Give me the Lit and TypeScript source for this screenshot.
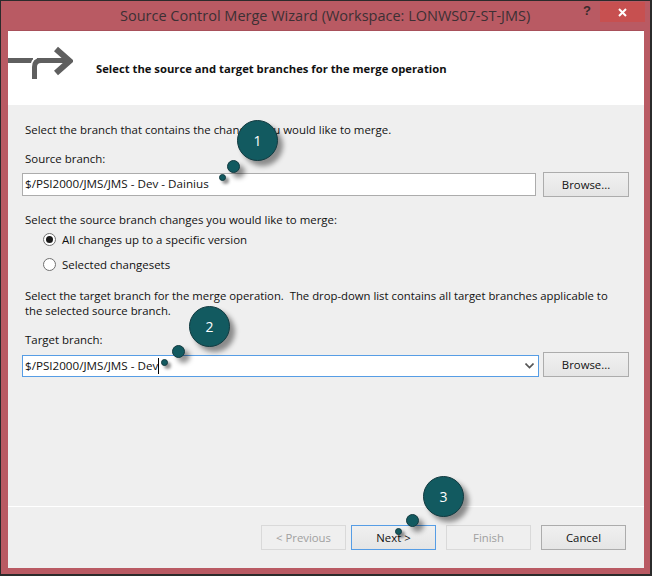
import { LitElement, html, css } from "lit";
import { customElement } from "lit/decorators.js";

@customElement("app-root")
export class AppRoot extends LitElement {
  static styles = css`
    :host { display: block; width: 652px; height: 576px; position: relative; box-sizing: border-box;
      font-family: "Open Sans", "Noto Sans", sans-serif; font-size: 11.35px; color: #111; overflow: hidden; }
    .win { box-sizing: border-box; width: 652px; height: 576px; background: #b95a63; border: 1px solid #2b2b2b; border-bottom-width: 2px; border-right-width:2px; display: flex; flex-direction: column; }
    .title { height: 29px; flex: none; position: relative; }
    .title-text { font-size: 14.5px; color: #3c3034; position: absolute; left: 119px; top: 5px; white-space: nowrap; }
    .help { position: absolute; left: 582px; top: 2px; font: bold 13px "Liberation Sans", sans-serif; color: #3a2a2c; }
    .close { position: absolute; left: 599px; top: 1px; width: 45px; height: 20px; background: #c75050; display: flex; align-items: center; justify-content: center; }
    .client { flex: 1; margin: 0 6px 6px 7px; background: #efefef; border-top: 1px solid #a8505a; display: flex; flex-direction: column; min-height: 0; }
    .header { height: 74px; flex: none; background: #fff; display: flex; align-items: center; gap: 23px; }
    .header svg { flex: none; margin-top: -10px; }
    .header b { font-size: 11.25px; font-weight: 700; margin-top: 1px; white-space: nowrap; }
    .body { flex: 1; padding: 17px 15px 0 17px; display: flex; flex-direction: column; }
    .line { line-height: 16px; height: 16px; white-space: pre; }
    .wide { font-size: 11.45px; }
    .row { display: flex; align-items: flex-end; gap: 7px; }
    .input { box-sizing: border-box; flex: none; background: #fff; border: 1px solid #acacac; padding-left: 2px; line-height: 20px; white-space: nowrap; font-size: 11.65px; }
    .src { width: 514px; height: 23px; margin-left: -3px; margin-bottom: 1px; }
    .tgt { width: 517px; height: 22px; margin-left: -3px; border-color: #569de5; display: flex; align-items: center; justify-content: space-between; padding-right: 4px; }
    .left { display: flex; align-items: center; }
    .caret { width: 1px; height: 16px; background: #000; }
    .btn { box-sizing: border-box; width: 86px; height: 25px; border: 1px solid #acacac; background: linear-gradient(#f0f0f0, #e5e5e5); display: flex; align-items: center; justify-content: center; flex: none; }
    .radios { padding-left: 18px; display: flex; flex-direction: column; gap: 9px; margin-top: 3px; font-size: 11.47px; }
    .radio { display: flex; align-items: center; gap: 6px; height: 16px; }
    .dot { box-sizing: border-box; width: 13px; height: 13px; border-radius: 50%; border: 1px solid #707070; background: #fff; display: flex; align-items: center; justify-content: center; flex: none; }
    .dot i { width: 7px; height: 7px; border-radius: 50%; background: #1a1a1a; display: block; }
    .foot { box-sizing: border-box; flex: none; height: 62px; border-top: 1px solid #fff; display: flex; align-items: flex-start; padding: 18px 0 0 253px; gap: 5px; }
    .foot .btn { width: 85px; }
    .dis { border-color: #d9d9d9; background: #efefef; color: #a0a0a0; }
    .def { border-color: #569de5; }
    .m10 { margin-left: 5px; }
    .call { position: absolute; border-radius: 50%; background: #125a60; border: 1px solid #123a40; box-sizing: border-box; box-shadow: 5px 5px 5px rgba(0,0,0,.42); color: #fff; display: flex; align-items: center; justify-content: center; font-size: 14px; }
    .big { width: 41px; height: 41px; }
    .mid { width: 13px; height: 13px; }
    .sm { width: 7px; height: 7px; box-shadow: 3px 3px 3px rgba(0,0,0,.42); }
  `;

  private callout(n: string, x: number, y: number, mx: number, my: number, sx: number, sy: number) {
    return html`
      <div class="call sm" style="left:${sx}px;top:${sy}px"></div>
      <div class="call mid" style="left:${mx}px;top:${my}px"></div>
      <div class="call big" style="left:${x}px;top:${y}px">${n}</div>`;
  }

  render() {
    return html`
      <div class="win">
        <div class="title">
          <div class="title-text">Source Control Merge Wizard (Workspace: LONWS07-ST-JMS)</div>
          <div class="help">?</div>
          <div class="close"><svg width="9" height="9" viewBox="0 0 9 9"><path d="M1 1L8 8M8 1L1 8" stroke="#fff" stroke-width="2"/></svg></div>
        </div>
        <div class="client">
          <div class="header">
            <svg width="65" height="36" viewBox="0 0 65 36" fill="none">
              <path d="M0 15.5H25" stroke="#5f5f5f" stroke-width="5"/>
              <path d="M26.5 34V22Q26.5 15.5 33 15.5" stroke="#fff" stroke-width="8"/>
              <path d="M29 15.5H62" stroke="#5f5f5f" stroke-width="5"/>
              <path d="M48 4L61.5 16L48 28" stroke="#5f5f5f" stroke-width="6"/>
              <path d="M26.5 34V22Q26.5 15.5 33 15.5" stroke="#5f5f5f" stroke-width="5"/>
            </svg>
            <b>Select the source and target branches for the merge operation</b>
          </div>
          <div class="body">
            <div class="line wide">Select the branch that contains the changes you would like to merge.</div>
            <div class="line wide" style="margin-top:13px">Source branch:</div>
            <div class="row" style="margin-top:5px">
              <div class="input src">$/PSI2000/JMS/JMS - Dev - Dainius</div>
              <div class="btn">Browse...</div>
            </div>
            <div class="line wide" style="margin-top:15px">Select the source branch changes you would like to merge:</div>
            <div class="radios">
              <div class="radio"><span class="dot"><i></i></span>All changes up to a specific version</div>
              <div class="radio"><span class="dot"></span>Selected changesets</div>
            </div>
            <div class="line" style="margin-top:16px;font-size:11.32px">Select the target branch for the merge operation.  The drop-down list contains all target branches applicable to</div>
            <div class="line" style="margin-top:-1px">the selected source branch.</div>
            <div class="line wide" style="margin-top:13px">Target branch:</div>
            <div class="row" style="margin-top:4px;gap:4px">
              <div class="input tgt"><span class="left">$/PSI2000/JMS/JMS - Dev<span class="caret"></span></span>
                <svg width="9" height="6" viewBox="0 0 9 6"><path d="M.5 .5L4.5 4.5L8.5 .5" fill="none" stroke="#555" stroke-width="1.6"/></svg>
              </div>
              <div class="btn">Browse...</div>
            </div>
          </div>
          <div class="foot">
            <div class="btn dis">&lt; Previous</div>
            <div class="btn def">Next &gt;</div>
            <div class="btn dis m10">Finish</div>
            <div class="btn m10">Cancel</div>
          </div>
        </div>
      </div>
      ${this.callout("1", 237, 120, 227, 160, 219, 174)}
      ${this.callout("2", 189, 306, 172, 345, 161, 359)}
      ${this.callout("3", 423, 476, 406, 514, 395, 528)}
    `;
  }
}
